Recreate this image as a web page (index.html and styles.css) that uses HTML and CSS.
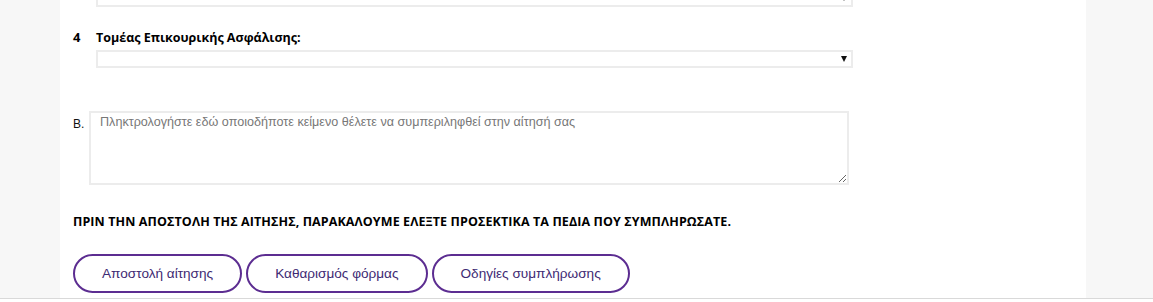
FILE: index.html
```html
<!DOCTYPE html>
<html lang="el">
<head>
    <meta charset="UTF-8">
    <meta name="viewport" content="width=device-width, initial-scale=1.0">
    <title>Αίτηση</title>
    <link rel="stylesheet" href="styles.css">
</head>
<body>
    <div class="wrap">
        <div class="page">
            <div class="field field-top">
                <div class="select-box">
                    <select class="select" name="fund"><option value=""></option></select>
                </div>
            </div>

            <div class="question">
                <span class="q-num">4</span>
                <label class="q-label" for="aux">Τομέας Επικουρικής Ασφάλισης:</label>
            </div>
            <div class="field">
                <div class="select-box">
                    <select class="select" id="aux" name="aux"><option value=""></option></select>
                </div>
            </div>

            <div class="comment-row">
                <span class="comment-mark">Β.</span>
                <textarea class="comment" name="comment" placeholder="Πληκτρολογήστε εδώ οποιοδήποτε κείμενο θέλετε να συμπεριληφθεί στην αίτησή σας"></textarea>
            </div>

            <p class="notice">ΠΡΙΝ ΤΗΝ ΑΠΟΣΤΟΛΗ ΤΗΣ ΑΙΤΗΣΗΣ, ΠΑΡΑΚΑΛΟΥΜΕ ΕΛΕΞΤΕ ΠΡΟΣΕΚΤΙΚΑ ΤΑ ΠΕΔΙΑ ΠΟΥ ΣΥΜΠΛΗΡΩΣΑΤΕ.</p>

            <div class="actions">
                <button type="submit" class="btn">Αποστολή αίτησης</button>
                <button type="reset" class="btn">Καθαρισμός φόρμας</button>
                <button type="button" class="btn">Οδηγίες συμπλήρωσης</button>
            </div>
        </div>
    </div>
</body>
</html>
```
FILE: styles.css
```css
* {
    margin: 0;
    padding: 0;
    box-sizing: border-box;
}

body {
    background: #fff;
    font-family: 'Open Sans', 'Noto Sans', sans-serif;
    color: #000;
    overflow: hidden;
}

.wrap {
    height: 299px;
    background: #f7f7f7;
    border-bottom: 1px solid #d9d9d9;
    overflow: hidden;
}

.page {
    display: flow-root;
    width: 1026px;
    height: 298px;
    margin-left: 60px;
    background: #fff;
    padding-left: 13px;
}

.field {
    padding-left: 23px;
}

.field-top {
    margin-top: -11px;
}

.select-box {
    position: relative;
    width: 757px;
    height: 18px;
}

.select {
    display: block;
    width: 100%;
    height: 100%;
    border: 2px solid #ececec;
    background: #fff;
    appearance: none;
    -webkit-appearance: none;
    outline: none;
}

.select-box::after {
    content: '';
    position: absolute;
    right: 6px;
    top: 6px;
    border-left: 3px solid transparent;
    border-right: 3px solid transparent;
    border-top: 6px solid #111;
    pointer-events: none;
}

.question {
    display: flex;
    align-items: baseline;
    margin-top: 21px;
    height: 22px;
}

.q-num {
    width: 23px;
    font-size: 13px;
    font-weight: 700;
}

.q-label {
    font-size: 12.5px;
    font-weight: 700;
}

.comment-row {
    display: flex;
    align-items: flex-start;
    margin-top: 43px;
}

.comment-mark {
    width: 16px;
    font-family: 'Liberation Sans', Arial, sans-serif;
    font-size: 12px;
    line-height: 14px;
    padding-top: 6px;
    color: #111;
}

.comment {
    width: 760px;
    height: 74px;
    border: 2px solid #ececec;
    padding: 2px 9px;
    font-family: 'Liberation Sans', Arial, sans-serif;
    font-size: 12.6px;
    line-height: 14px;
    color: #333;
    outline: none;
    resize: both;
}

.comment::placeholder {
    color: #777;
}

.notice {
    margin-top: 29px;
    font-size: 12.5px;
    font-weight: 700;
    line-height: 16px;
    letter-spacing: 0.1px;
}

.actions {
    display: flex;
    gap: 4px;
    margin-top: 24px;
}

.btn {
    height: 39px;
    padding: 0 27px;
    border: 2px solid #5c2d91;
    border-radius: 20px;
    background: #fff;
    color: #3e2a73;
    font-family: 'Liberation Sans', Arial, sans-serif;
    font-size: 13.6px;
    cursor: pointer;
}
```
